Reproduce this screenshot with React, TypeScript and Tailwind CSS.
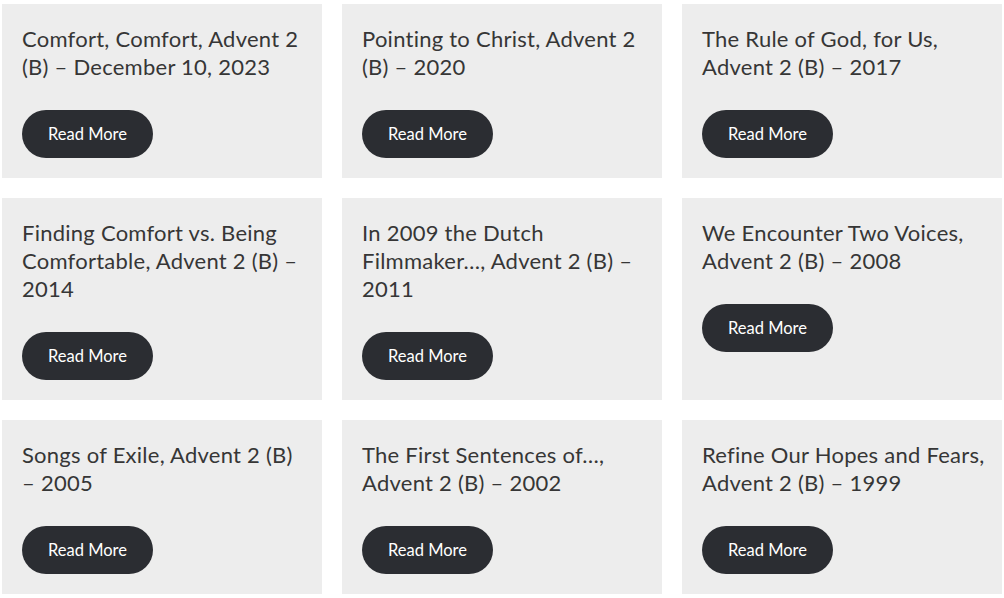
import React from "react";

const items = [
  "Comfort, Comfort, Advent 2 (B) – December 10, 2023",
  "Pointing to Christ, Advent 2 (B) – 2020",
  "The Rule of God, for Us, Advent 2 (B) – 2017",
  "Finding Comfort vs. Being Comfortable, Advent 2 (B) – 2014",
  "In 2009 the Dutch Filmmaker…, Advent 2 (B) – 2011",
  "We Encounter Two Voices, Advent 2 (B) – 2008",
  "Songs of Exile, Advent 2 (B) – 2005",
  "The First Sentences of…, Advent 2 (B) – 2002",
  "Refine Our Hopes and Fears, Advent 2 (B) – 1999",
];

export default function App() {
  return (
    <div className="bg-white w-[1004px] h-[598px] overflow-hidden pl-[2px] pt-[4px]" style={{ fontFamily: "Lato, 'Open Sans', sans-serif" }}>
      <div className="grid grid-cols-3 gap-x-[20px] gap-y-[20px] w-[1000px]">
        {items.map((t) => (
          <div key={t} className="bg-[#ededed] pl-[20px] pr-[14px] pt-[21px] pb-[20px]">
            <h2 className="text-[22px] leading-[28px] tracking-[0.25px] text-[#363636] font-normal">{t}</h2>
            <button className="mt-[29px] w-[131px] h-[48px] rounded-full bg-[#2b2d32] text-white text-[16.5px] pt-[1px]">
              Read More
            </button>
          </div>
        ))}
      </div>
    </div>
  );
}
